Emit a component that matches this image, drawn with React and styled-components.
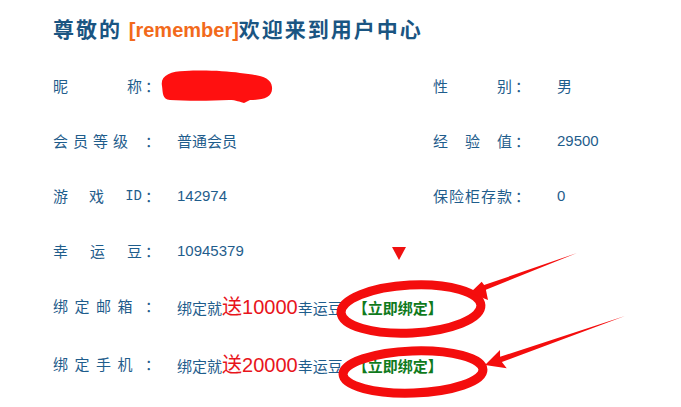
import React from 'react';
import styled, {createGlobalStyle} from 'styled-components';

const GlobalStyle = createGlobalStyle`
  html, body {
    margin: 0;
    padding: 0;
    background: #fff;
  }
  body {
    font-family: "Noto Sans CJK SC", "Liberation Sans", sans-serif;
  }
`;

const Page = styled.div`
  position: relative;
  width: 681px;
  height: 407px;
  padding-left: 53px;
  box-sizing: border-box;
  overflow: hidden;
`;

const Title = styled.h1`
  margin: 0;
  height: 58px;
  line-height: 56px;
  font-size: 21px;
  font-weight: 700;
  letter-spacing: 2px;
  color: #1a5582;
  white-space: nowrap;
`;

const UserName = styled.span`
  font-family: "Liberation Sans", sans-serif;
  font-size: 20px;
  letter-spacing: 0;
  color: #f26a1b;
`;

const Row = styled.div`
  display: flex;
  align-items: center;
  height: ${p => p.h || 55}px;
`;

const Field = styled.div`
  display: flex;
  align-items: center;
  width: ${p => p.w ? `${p.w}px` : 'auto'};
`;

const Label = styled.div`
  display: flex;
  align-items: center;
  flex: none;
  width: 124px;
  font-size: 15px;
  color: #1f5d8c;
`;

const LabelChars = styled.div`
  display: flex;
  align-items: center;
  width: ${p => p.w}px;
  justify-content: ${p => p.gap !== undefined ? 'flex-start' : 'space-between'};
  gap: ${p => p.gap || 0}px;
  span.latin {
    font-family: "Liberation Mono", monospace;
    font-size: 14px;
  }
`;

const Colon = styled.span`
  width: 15px;
  padding-left: 3px;
`;

const Value = styled.div`
  font-size: 15px;
  color: #1f5d8c;
  white-space: nowrap;
  font-family: "Liberation Sans", "Noto Sans CJK SC", sans-serif;
`;

const Gift = styled.span`
  font-size: 20px;
  color: #e8141b;
  font-family: "Liberation Sans", "Noto Sans CJK SC", sans-serif;
`;

const BindLink = styled.a`
  margin-left: 10px;
  font-size: 15px;
  font-weight: 700;
  color: #0f7a1c;
  text-decoration: none;
  font-family: "Noto Sans CJK SC", sans-serif;
`;

const Marks = styled.svg`
  position: absolute;
  left: 0;
  top: 0;
  pointer-events: none;
`;

function InfoLabel({ chars, w = 89, gap }) {
    return (
        <Label>
            <LabelChars w={w} gap={gap}>
                {chars.map((c, i) => (
                    <span key={i} className={/[A-Z]/.test(c) ? 'latin' : undefined}>{c}</span>
                ))}
            </LabelChars>
            <Colon>：</Colon>
        </Label>
    );
}

function BindValue({ amount }) {
    return (
        <Value>
            绑定就<Gift>送{amount}</Gift>幸运豆
            <BindLink href="#">【立即绑定】</BindLink>
        </Value>
    );
}

function Annotations() {
    return (
        <Marks width="681" height="407" viewBox="0 0 681 407">
            <path
                d="M162,86 C160,76 170,71 185,71 C205,70 225,71 240,73 C256,75 271,76 272,87 C273,97 264,100 250,100 L244,103 C239,102 237,100 229,100 C210,101 185,101 170,100 C162,99 163,93 162,86 Z"
                fill="#ff1010"
            />
            <polygon points="392,247 406,247 399,260" fill="#f01010" />
            <ellipse cx="411" cy="309" rx="70" ry="24" fill="none" stroke="#f40d0d" strokeWidth="9" transform="rotate(-3 411 309)" />
            <ellipse cx="413" cy="372" rx="70" ry="21" fill="none" stroke="#f40d0d" strokeWidth="9" transform="rotate(-2 413 372)" />
            <polygon points="577,253 485.9,289.7 488,300 470,293 481.7,281.7 484.1,285.1" fill="#f40d0d" />
            <polygon points="625,316 501.9,362 506.7,368.3 485,365 500,350 500.1,356.8" fill="#f40d0d" />
        </Marks>
    );
}

export default function App() {
    return (
        <>
            <GlobalStyle />
            <Page>
                <Title>尊敬的 <UserName>[remember]</UserName>欢迎来到用户中心</Title>
                <Row>
                    <Field w={380}>
                        <InfoLabel chars={['昵', '称']} />
                        <Value />
                    </Field>
                    <Field>
                        <InfoLabel chars={['性', '别']} w={79} />
                        <Value>男</Value>
                    </Field>
                </Row>
                <Row>
                    <Field w={380}>
                        <InfoLabel chars={['会', '员', '等', '级']} gap={5} />
                        <Value>普通会员</Value>
                    </Field>
                    <Field>
                        <InfoLabel chars={['经', '验', '值']} w={79} />
                        <Value>29500</Value>
                    </Field>
                </Row>
                <Row>
                    <Field w={380}>
                        <InfoLabel chars={['游', '戏', 'ID']} />
                        <Value>142974</Value>
                    </Field>
                    <Field>
                        <InfoLabel chars={['保', '险', '柜', '存', '款']} w={79} />
                        <Value>0</Value>
                    </Field>
                </Row>
                <Row>
                    <Field w={380}>
                        <InfoLabel chars={['幸', '运', '豆']} />
                        <Value>10945379</Value>
                    </Field>
                </Row>
                <Row>
                    <Field>
                        <InfoLabel chars={['绑', '定', '邮', '箱']} gap={6.5} />
                        <BindValue amount="10000" />
                    </Field>
                </Row>
                <Row h={60}>
                    <Field>
                        <InfoLabel chars={['绑', '定', '手', '机']} gap={6.5} />
                        <BindValue amount="20000" />
                    </Field>
                </Row>
                <Annotations />
            </Page>
        </>
    );
}
